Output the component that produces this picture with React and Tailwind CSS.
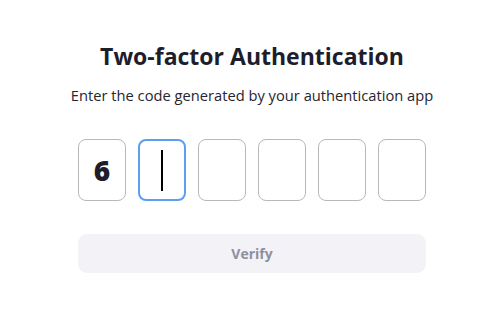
export default function App() {
  const digits = ["6", "", "", "", "", ""];
  return (
    <div className="w-[500px] h-[315px] bg-white flex flex-col items-center pl-[4px]" style={{ fontFamily: '"Open Sans", sans-serif' }}>
      <h1 className="mt-[40px] text-[23px] leading-[32px] font-bold text-[#1d1d2b]">Two-factor Authentication</h1>
      <p className="mt-[12px] text-[14.7px] leading-[22px] text-[#262630]">Enter the code generated by your authentication app</p>
      <div className="mt-[33px] flex gap-[12px]">
        {digits.map((d, i) => (
          <div
            key={i}
            className={
              i === 1
                ? "w-[48px] h-[62px] rounded-[8px] border-[2px] border-[#5b9ff0] flex items-center justify-center"
                : "w-[48px] h-[62px] rounded-[8px] border-[1.5px] border-[#b8b8bb] flex items-center justify-center"
            }
          >
            {d && <span className="text-[28px] font-extrabold text-[#1d1d2b]">{d}</span>}
            {i === 1 && <div className="w-[1.5px] h-[41px] bg-black" />}
          </div>
        ))}
      </div>
      <button className="mt-[33px] w-[348px] h-[39px] rounded-[9px] bg-[#f2f2f7] text-[14px] font-bold text-[#8e909c]">Verify</button>
    </div>
  );
}
